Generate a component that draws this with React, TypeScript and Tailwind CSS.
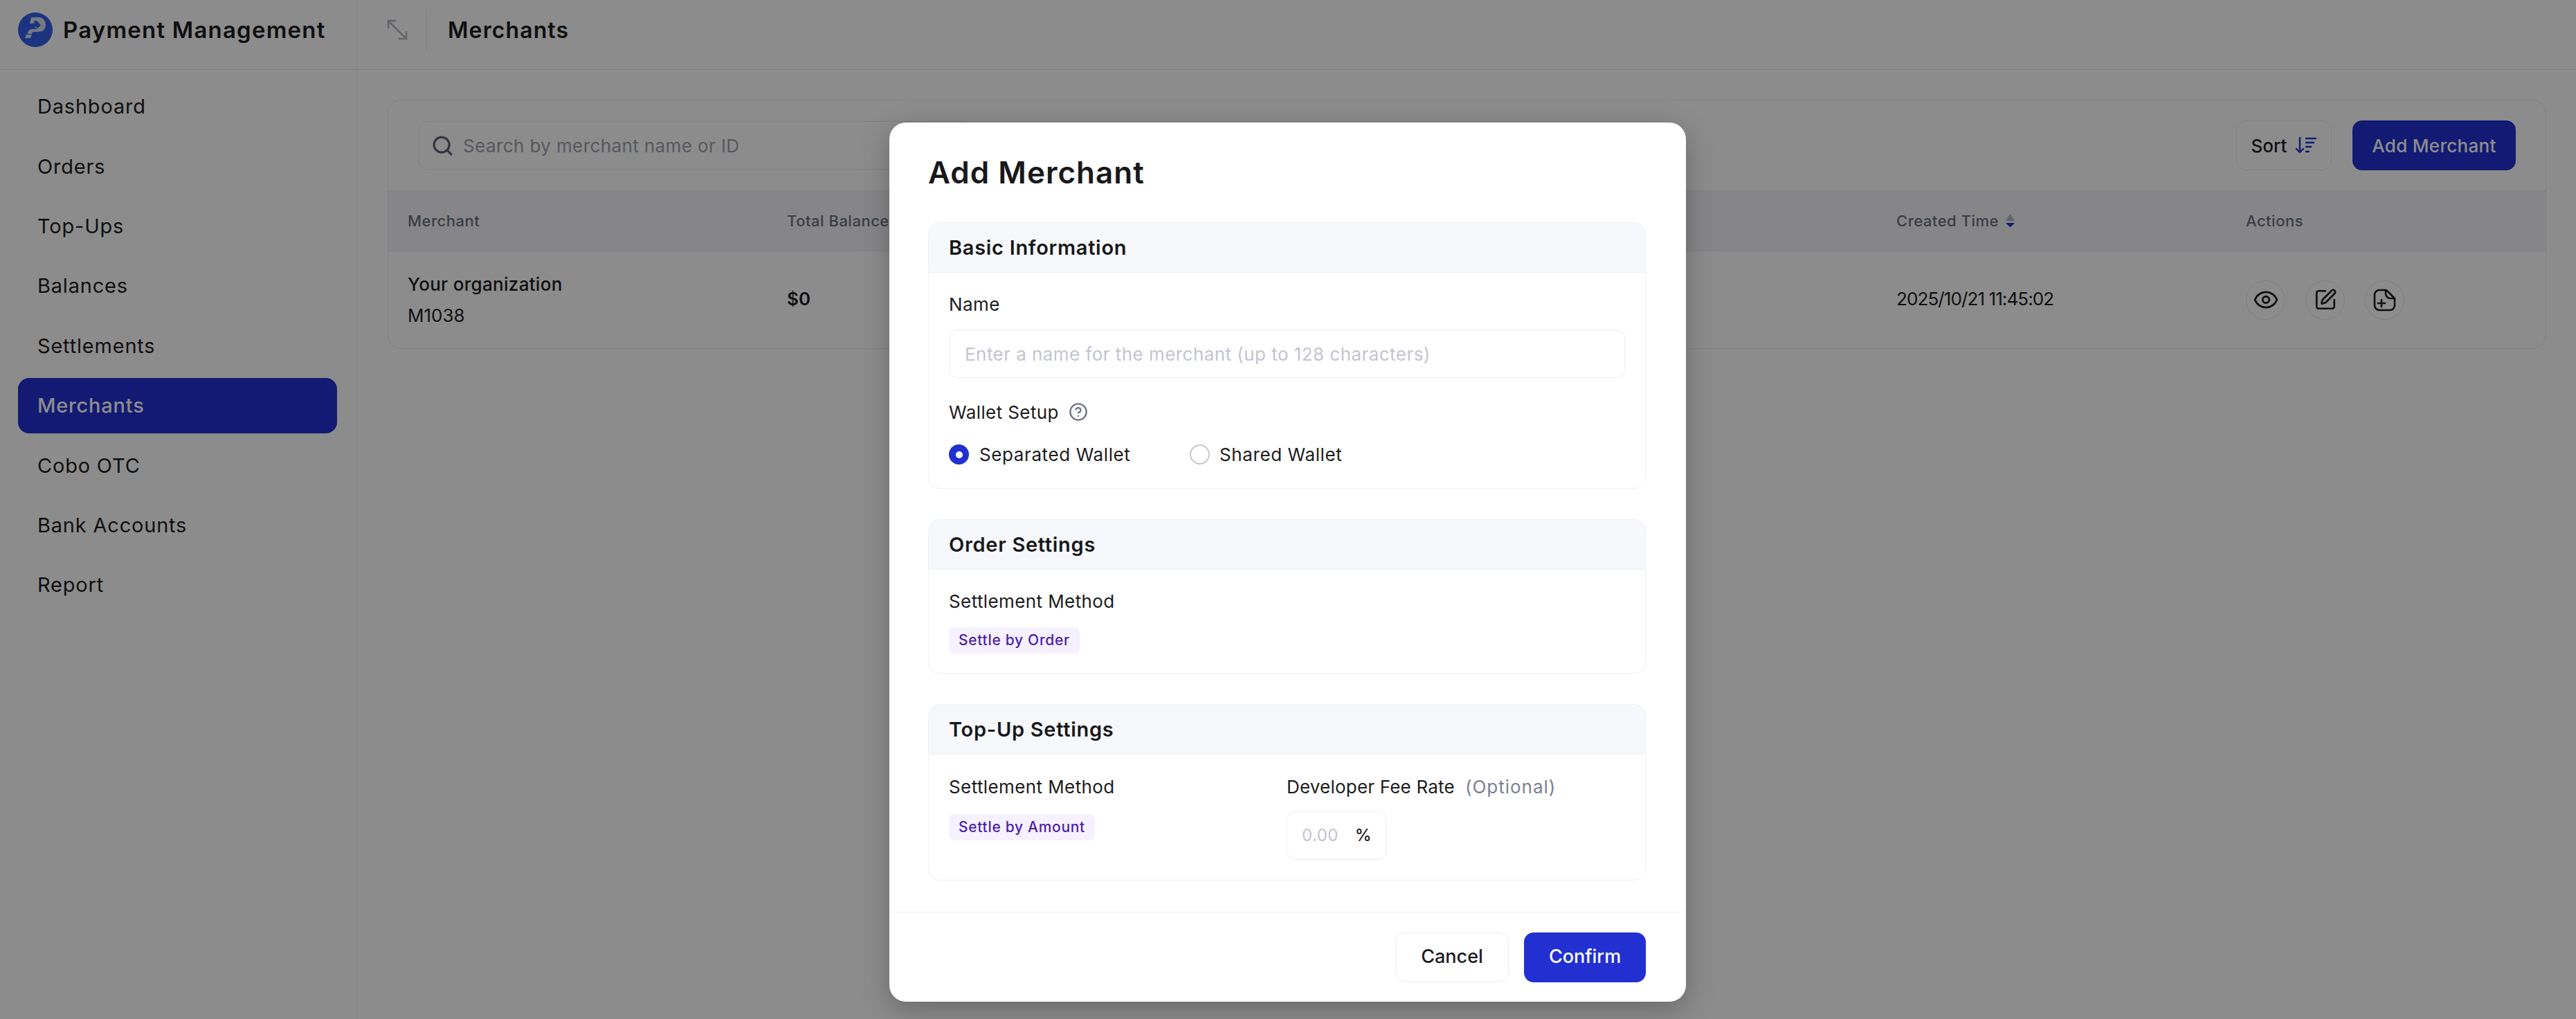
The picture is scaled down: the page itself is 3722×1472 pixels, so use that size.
import { Eye, SquarePen, Search, CircleHelp } from "lucide-react";

const nav = ["Dashboard", "Orders", "Top-Ups", "Balances", "Settlements", "Merchants", "Cobo OTC", "Bank Accounts", "Report"];

function Logo() {
  return (
    <svg width="50" height="50" viewBox="0 0 50 50" className="shrink-0">
      <circle cx="25" cy="25" r="25" fill="#3360e9" />
      <path d="M19 7 H30 C36 7 40 12 40 18 C40 25 35 28 29 28 H23 C21 28 20 29 20 31 H14 C14 26 17 24 21 24 H27 L21 16 H17 Z" fill="#d5dcf2" />
      <path d="M23 12 H27 L33 18 L27 24 V20.500 H21 V15.500 H24 Z" fill="#3360e9" />
      <path d="M12 32 H20 L18 37 H10 Z" fill="#d5dcf2" />
    </svg>
  );
}

function FilePlus() {
  return (
    <svg width="33" height="33" viewBox="0 0 33 33" fill="none" stroke="#1c1c1e" strokeWidth="2.6" strokeLinecap="round" strokeLinejoin="round">
      <path d="M18 2 H9 C5 2 2 5 2 9 V24 C2 28 5 31 9 31 H24 C28 31 31 28 31 24 V15 C31 14 30.500 13.500 30 13 L20 3 C19.500 2.500 19 2 18 2 Z" />
      <path d="M18 2 V7 C18 11 21 14 25 14 H31" />
      <path d="M7 21 H17 M12 16 V26" />
    </svg>
  );
}

function SortIcon() {
  return (
    <svg width="30" height="24" viewBox="0 0 30 24" fill="none" stroke="#2230d2" strokeWidth="2.400" strokeLinecap="round" className="shrink-0">
      <path d="M6 1 V22 M1 17 L6 22 L11 17" strokeLinejoin="round" />
      <path d="M15 2 H29 M15 8 H26 M15 14 H22 M15 21 H19" />
    </svg>
  );
}

function Section({ title, children, bodyClass }: { title: string; children: React.ReactNode; bodyClass: string }) {
  return (
    <section className="overflow-hidden rounded-[16px] border border-[#eef0f4]">
      <div className="flex h-[72px] items-center border-b border-[#eef0f4] bg-[#f7f8fc] px-[29px] text-[29px] font-semibold tracking-[0.7px] text-[#18181b]">{title}</div>
      <div className={bodyClass}>{children}</div>
    </section>
  );
}

function Badge({ children }: { children: string }) {
  return <span className="inline-flex h-[38px] items-center rounded-[8px] bg-[#f6f1fe] px-[14px] text-[21px] font-medium tracking-[0.7px] text-[#4c1fa8]">{children}</span>;
}

export default function App() {
  return (
    <div className="relative h-[1472px] w-[3722px] overflow-hidden bg-white text-[#1c1c1e]" style={{ fontFamily: "Inter, 'Liberation Sans', sans-serif" }}>
      <header className="flex h-[101px] border-b border-[#e8e9ed]">
        <div className="flex w-[516px] shrink-0 items-center gap-[15px] border-r border-[#eef0f3] pb-[15px] pl-[26px]">
          <Logo />
          <span className="translate-y-[1px] text-[33px] font-semibold tracking-[1.2px]">Payment Management</span>
        </div>
        <div className="flex items-center pb-[15px]">
          <svg width="30" height="30" viewBox="0 0 30 30" fill="none" stroke="#b6b8c2" strokeWidth="2.6" className="ml-[43px] shrink-0">
            <path d="M2 2 L28 28 M2 13 V2 H13 M28 17 V28 H17" />
          </svg>
          <div className="ml-[27px] h-[58px] w-px bg-[#e4e5ea]" />
          <span className="ml-[30px] translate-y-[1px] text-[32px] font-semibold tracking-[1.1px]">Merchants</span>
        </div>
      </header>

      <div className="flex h-[1371px]">
        <aside className="flex w-[516px] shrink-0 flex-col gap-[6.4px] border-r border-[#eef0f3] px-[26px] pt-[13px]">
          {nav.map((n) => (
            <div key={n} className={n === "Merchants" ? "flex h-[80px] w-[461px] items-center rounded-[16px] bg-[#2230d2] pl-[28px] text-[29px] font-medium tracking-[0.8px] text-white" : "flex h-[80px] items-center pl-[28px] text-[29px] tracking-[0.8px]"}>
              {n}
            </div>
          ))}
        </aside>

        <main className="flex-1 pl-[44px] pr-[43px] pt-[43px]">
          <div className="h-[360px] overflow-hidden rounded-[20px] border border-[#eaecf0]">
            <div className="flex h-[131px] items-center justify-between border-b border-[#eaecf0] pl-[43px] pr-[43px]">
              <div className="flex h-[70px] w-[800px] items-center gap-[13px] rounded-[14px] border border-[#eaecf0] pl-[18px] text-[26px] tracking-[0.4px] text-[#9ea1ac]">
                <Search size={33} strokeWidth={2.4} color="#5f6475" className="shrink-0" />
                <span>Search by merchant name or ID</span>
              </div>
              <div className="flex items-center gap-[30px]">
                <div className="flex h-[72px] w-[138px] items-center justify-center gap-[13px] rounded-[14px] border border-[#eaecf0] text-[26px] font-medium">
                  Sort
                  <SortIcon />
                </div>
                <div className="flex h-[72px] w-[236px] items-center justify-center rounded-[14px] bg-[#2230d2] text-[26px] font-medium tracking-[0.3px] text-white">Add Merchant</div>
              </div>
            </div>
            <div className="grid h-[87px] grid-cols-[548px_1603px_505px_1fr] items-center border-b border-[#eaecf0] bg-[#f4f5f7] pl-[28px] text-[22px] font-medium tracking-[0.5px] text-[#6a6e80]">
              <span>Merchant</span>
              <span>Total Balance</span>
              <span className="flex items-center gap-[10px]">
                Created Time
                <svg width="13" height="20" viewBox="0 0 13 20">
                  <path d="M6.500 0 L13 10 H0 Z" fill="#b6b8c2" />
                  <path d="M0 13 H13 L6.500 19.500 Z" fill="#2230d2" />
                </svg>
              </span>
              <span>Actions</span>
            </div>
            <div className="grid h-[140px] grid-cols-[548px_1603px_505px_1fr] items-center pb-[3px] pl-[28px] text-[26px]">
              <div className="flex flex-col gap-[6px] pt-[2px]">
                <span className="font-medium tracking-[0.3px]">Your organization</span>
                <span>M1038</span>
              </div>
              <span className="font-semibold">$0</span>
              <span className="tracking-[-0.9px]">2025/10/21 11:45:02</span>
              <div className="flex gap-[29px] pt-[3px]">
                <div className="flex size-[57px] items-center justify-center rounded-full border border-[#e8e9ed]"><Eye size={38} strokeWidth={1.8} /></div>
                <div className="flex size-[57px] items-center justify-center rounded-full border border-[#e8e9ed]"><SquarePen size={34} strokeWidth={1.9} /></div>
                <div className="flex size-[57px] items-center justify-center rounded-full border border-[#e8e9ed]"><FilePlus /></div>
              </div>
            </div>
          </div>
        </main>
      </div>

      <div className="absolute inset-0 flex items-start justify-center bg-black/45 pr-[1px] pt-[177px]">
        <div className="flex h-[1270px] w-[1151px] flex-col rounded-[24px] bg-white shadow-[0_12px_40px_rgba(0,0,0,0.25)]">
          <h2 className="flex h-[144px] shrink-0 items-center px-[56px] text-[44px] font-semibold tracking-[1px] text-[#18181b]">Add Merchant</h2>
          <div className="flex flex-1 flex-col gap-[44px] pl-[56px] pr-[58px]">
            <Section title="Basic Information" bodyClass="h-[311px] px-[29px] pt-[30px] text-[26px] tracking-[0.4px]">
              <div className="flex h-[30px] items-center">Name</div>
              <div className="mt-[22px] flex h-[70px] items-center rounded-[12px] border border-[#eceef2] px-[22px] text-[26px] tracking-[0.45px] text-[#c3c5cf]">Enter a name for the merchant (up to 128 characters)</div>
              <div className="mt-[34px] flex h-[30px] items-center gap-[14px]">
                Wallet Setup
                <CircleHelp size={28} strokeWidth={2} color="#6f7385" />
              </div>
              <div className="mt-[27px] flex items-center tracking-[0.6px]">
                <span className="flex size-[29px] items-center justify-center rounded-full bg-[#2230d2]"><span className="size-[10px] rounded-full bg-white" /></span>
                <span className="ml-[15px] w-[304px]">Separated Wallet</span>
                <span className="size-[29px] rounded-full border-2 border-[#c6c8d0]" />
                <span className="ml-[14px]">Shared Wallet</span>
              </div>
            </Section>
            <Section title="Order Settings" bodyClass="h-[149px] px-[29px] pt-[30px] text-[26px] tracking-[0.4px]">
              <div className="flex h-[30px] items-center">Settlement Method</div>
              <div className="mt-[23px] flex"><Badge>Settle by Order</Badge></div>
            </Section>
            <Section title="Top-Up Settings" bodyClass="flex h-[181px] px-[29px] pt-[31px] text-[26px] tracking-[0.4px]">
              <div className="w-[488px]">
                <div className="flex h-[30px] items-center">Settlement Method</div>
                <div className="mt-[25px] flex"><Badge>Settle by Amount</Badge></div>
              </div>
              <div>
                <div className="flex h-[30px] items-center gap-[15px] tracking-[0.2px]">
                  Developer Fee Rate
                  <span className="tracking-[1px] text-[#7b7f90]">(Optional)</span>
                </div>
                <div className="mt-[21px] flex h-[70px] w-[144px] items-center justify-between rounded-[12px] border border-[#eceef2] pl-[21px] pr-[20px] text-[24px]">
                  <span className="text-[#c3c5cf]">0.00</span>
                  <span className="font-medium">%</span>
                </div>
              </div>
            </Section>
          </div>
          <div className="flex h-[130px] shrink-0 items-center justify-end gap-[22px] border-t border-[#eef0f3] pr-[58px]">
            <div className="flex h-[72px] w-[164px] items-center justify-center rounded-[14px] border border-[#eceef2] text-[27px] font-medium">Cancel</div>
            <div className="flex h-[72px] w-[176px] items-center justify-center rounded-[14px] bg-[#2230d2] text-[27px] font-medium text-white">Confirm</div>
          </div>
        </div>
      </div>
    </div>
  );
}
